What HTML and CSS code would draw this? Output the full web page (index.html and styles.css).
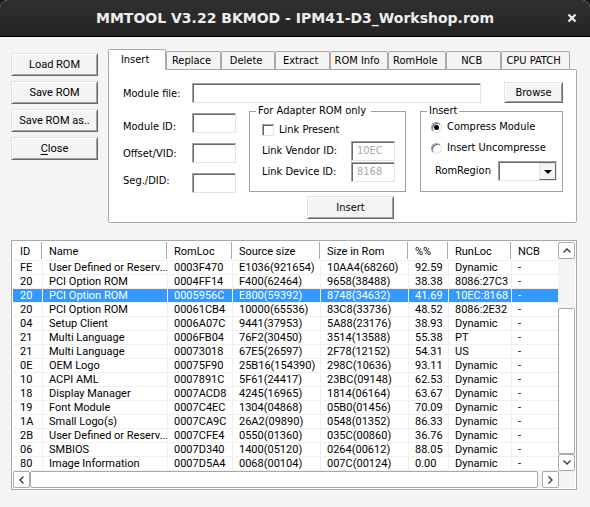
FILE: index.html
```
<!DOCTYPE html>
<html lang="en">
<head>
<meta charset="utf-8">
<title>MMTOOL V3.22 BKMOD - IPM41-D3_Workshop.rom</title>
<link rel="stylesheet" href="styles.css">
</head>
<body>
<div class="window">
  <header class="titlebar">
    <h1>MMTOOL V3.22 BKMOD - IPM41-D3_Workshop.rom</h1>
    <button class="close" aria-label="Close window"><svg width="10" height="10" viewBox="0 0 10 10"><path d="M1.5 1.5l7 7M8.500 1.500l-7 7" stroke="#eee" stroke-width="2.200" fill="none"/></svg></button>
  </header>
  <main>
    <section class="top">
      <div class="actions">
        <button class="btn">Load ROM</button>
        <button class="btn">Save ROM</button>
        <button class="btn">Save ROM as..</button>
        <button class="btn"><u>C</u>lose</button>
      </div>
      <div class="tabs">
        <nav class="tablist" role="tablist">
          <button class="tab active" role="tab" aria-selected="true">Insert</button>
          <button class="tab" role="tab">Replace</button>
          <button class="tab" role="tab">Delete</button>
          <button class="tab" role="tab">Extract</button>
          <button class="tab wide" role="tab">ROM Info</button>
          <button class="tab wide" role="tab">RomHole</button>
          <button class="tab" role="tab">NCB</button>
          <button class="tab widest" role="tab">CPU PATCH</button>
        </nav>
        <div class="panel" role="tabpanel">
          <div class="file-row">
            <label for="file">Module file:</label>
            <input class="field" id="file" type="text">
            <button class="btn">Browse</button>
          </div>
          <div class="groups">
            <div class="id-labels">
              <label for="mid">Module ID:</label>
              <label for="vid">Offset/VID:</label>
              <label for="did">Seg./DID:</label>
            </div>
            <div class="id-fields">
              <input class="field" id="mid" type="text">
              <input class="field" id="vid" type="text">
              <input class="field" id="did" type="text">
            </div>
            <fieldset class="adapter">
              <legend>For Adapter ROM only</legend>
              <div class="check"><input type="checkbox" id="link"><label for="link">Link Present</label></div>
              <div class="pair"><label for="lv">Link Vendor ID:</label><input class="field" id="lv" type="text" value="10EC" disabled></div>
              <div class="pair"><label for="ld">Link Device ID:</label><input class="field" id="ld" type="text" value="8168" disabled></div>
            </fieldset>
            <fieldset class="mode">
              <legend>Insert</legend>
              <div class="check"><input type="radio" name="mode" id="comp" checked><label for="comp">Compress Module</label></div>
              <div class="check"><input type="radio" name="mode" id="unc"><label for="unc">Insert Uncompresse</label></div>
              <div class="region"><label for="region">RomRegion</label>
                <span class="combo"><select id="region"><option></option></select><span class="drop"><svg width="8" height="4" viewBox="0 0 8 4"><path d="M0 0h8L4 4z"/></svg></span></span>
              </div>
            </fieldset>
          </div>
          <button class="btn insert">Insert</button>
        </div>
      </div>
    </section>
    <section class="list">
      <table>
        <colgroup><col class="c-id"><col><col class="c-loc"><col class="c-size"><col class="c-size"><col class="c-pct"><col class="c-run"><col class="c-ncb"></colgroup>
        <thead><tr><th>ID</th><th>Name</th><th>RomLoc</th><th>Source size</th><th>Size in Rom</th><th>%%</th><th>RunLoc</th><th>NCB</th></tr></thead>
        <tbody>
          <tr><td>FE</td><td>User Defined or Reserv...</td><td>0003F470</td><td>E1036(921654)</td><td>10AA4(68260)</td><td>92.59</td><td>Dynamic</td><td>-</td></tr>
          <tr><td>20</td><td>PCI Option ROM</td><td>0004FF14</td><td>F400(62464)</td><td>9658(38488)</td><td>38.38</td><td>8086:27C3</td><td>-</td></tr>
          <tr class="selected"><td>20</td><td>PCI Option ROM</td><td>0005956C</td><td>E800(59392)</td><td>8748(34632)</td><td>41.69</td><td>10EC:8168</td><td>-</td></tr>
          <tr><td>20</td><td>PCI Option ROM</td><td>00061CB4</td><td>10000(65536)</td><td>83C8(33736)</td><td>48.52</td><td>8086:2E32</td><td>-</td></tr>
          <tr><td>04</td><td>Setup Client</td><td>0006A07C</td><td>9441(37953)</td><td>5A88(23176)</td><td>38.93</td><td>Dynamic</td><td>-</td></tr>
          <tr><td>21</td><td>Multi Language</td><td>0006FB04</td><td>76F2(30450)</td><td>3514(13588)</td><td>55.38</td><td>PT</td><td>-</td></tr>
          <tr><td>21</td><td>Multi Language</td><td>00073018</td><td>67E5(26597)</td><td>2F78(12152)</td><td>54.31</td><td>US</td><td>-</td></tr>
          <tr><td>0E</td><td>OEM Logo</td><td>00075F90</td><td>25B16(154390)</td><td>298C(10636)</td><td>93.11</td><td>Dynamic</td><td>-</td></tr>
          <tr><td>10</td><td>ACPI AML</td><td>0007891C</td><td>5F61(24417)</td><td>23BC(09148)</td><td>62.53</td><td>Dynamic</td><td>-</td></tr>
          <tr><td>18</td><td>Display Manager</td><td>0007ACD8</td><td>4245(16965)</td><td>1814(06164)</td><td>63.67</td><td>Dynamic</td><td>-</td></tr>
          <tr><td>19</td><td>Font Module</td><td>0007C4EC</td><td>1304(04868)</td><td>05B0(01456)</td><td>70.09</td><td>Dynamic</td><td>-</td></tr>
          <tr><td>1A</td><td>Small Logo(s)</td><td>0007CA9C</td><td>26A2(09890)</td><td>0548(01352)</td><td>86.33</td><td>Dynamic</td><td>-</td></tr>
          <tr><td>2B</td><td>User Defined or Reserv...</td><td>0007CFE4</td><td>0550(01360)</td><td>035C(00860)</td><td>36.76</td><td>Dynamic</td><td>-</td></tr>
          <tr><td>06</td><td>SMBIOS</td><td>0007D340</td><td>1400(05120)</td><td>0264(00612)</td><td>88.05</td><td>Dynamic</td><td>-</td></tr>
          <tr><td>80</td><td>Image Information</td><td>0007D5A4</td><td>0068(00104)</td><td>007C(00124)</td><td>0.00</td><td>Dynamic</td><td>-</td></tr>
        </tbody>
      </table>
      <div class="vbar">
        <button class="arrow" aria-label="Scroll up"><svg width="8" height="5" viewBox="0 0 8 5"><path d="M.5 4.500L4 1l3.500 3.500"/></svg></button>
        <div class="vtrack"><div class="thumb"></div></div>
        <button class="arrow" aria-label="Scroll down"><svg width="8" height="5" viewBox="0 0 8 5"><path d="M.5.500L4 4l3.500-3.500"/></svg></button>
      </div>
      <div class="hbar">
        <button class="arrow" aria-label="Scroll left"><svg width="5" height="8" viewBox="0 0 5 8"><path d="M4.500.500L1 4l3.500 3.500"/></svg></button>
        <div class="htrack"><div class="thumb"></div></div>
        <button class="arrow" aria-label="Scroll right"><svg width="5" height="8" viewBox="0 0 5 8"><path d="M.5.500L4 4L.5 7.500"/></svg></button>
      </div>
    </section>
  </main>
</div>
</body>
</html>
```
FILE: styles.css
```
* { box-sizing: border-box; }
body {
  margin: 0;
  background: #15151f;
  color: #000;
  font: 11px/14px "DejaVu Sans Condensed", "DejaVu Sans", sans-serif;
}
button, input, select { font: inherit; color: inherit; margin: 0; }
.window {
  min-height: 100vh;
  background: #f4f4f4;
  border-radius: 8px 8px 0 0;
  overflow: hidden;
}

/* Title bar */
.titlebar {
  display: grid;
  grid-template-columns: 24px 1fr 24px;
  align-items: center;
  height: 37px;
  padding: 0 6px;
  background: linear-gradient(#303030, #242424);
  border-bottom: 1px solid #000;
  color: #eee;
}
.titlebar h1 {
  grid-column: 2;
  margin: 0;
  text-align: center;
  white-space: nowrap;
  font: bold 14px/18px "DejaVu Sans", sans-serif;
}
.close { display: flex; justify-content: center; padding: 0; border: 0; background: none; }

main { padding: 12px 13px 17px 11px; }
.top { display: flex; gap: 10px; }

/* Push buttons */
.btn {
  padding: 0;
  background: #f4f4f4;
  border: 1px solid;
  border-color: #e3e3e3 #696969 #696969 #e3e3e3;
  box-shadow: inset 1px 1px #fff, inset -1px -1px #a0a0a0;
}
.actions {
  display: flex;
  flex-direction: column;
  gap: 5px;
  width: 87px;
  padding-top: 4px;
  font: 11px/14px "Roboto", sans-serif;
}
.actions .btn { height: 23px; }
.actions u { text-underline-offset: 2px; }

/* Tabs */
.tabs { flex: 1; }
.tablist { display: flex; align-items: flex-end; height: 21px; margin-right: 7px; }
.tab {
  flex: 54 1 0;
  height: 19px;
  padding: 0 4px 0 0;
  background: #f4f4f4;
  border: 1px solid #a9a9a9;
  border-radius: 2px 2px 0 0;
}
.tab.active { flex-grow: 58; height: 21px; background: #fff; border-bottom-color: #fff; }
.tab.wide { flex-grow: 58; }
.tab.widest { flex-grow: 70; }
.panel {
  display: flex;
  flex-direction: column;
  padding: 12px 13px 3px 14px;
  margin-top: -1px;
  background: #fff;
  border: 1px solid #a9a9a9;
  border-radius: 0 2px 2px 2px;
}
.field {
  width: 44px;
  height: 20px;
  padding: 0 5px;
  background: #fff;
  border: 1px solid;
  border-color: #a0a0a0 #e3e3e3 #e3e3e3 #a0a0a0;
  border-radius: 0;
  box-shadow: inset 1px 1px #696969;
}
.field:disabled { color: #a9a9a9; }
.file-row { display: flex; align-items: center; }
.file-row label { width: 69px; padding-top: 3px; }
.file-row .field { flex: 1; margin-right: 23px; }
.file-row .btn { width: 59px; height: 21px; }
.groups { display: flex; margin-top: 5px; }
.id-labels, .id-fields { display: flex; flex-direction: column; }
.id-labels { gap: 13px; width: 69px; padding-top: 12px; }
.id-fields { gap: 10px; margin-right: 13px; padding-top: 5px; }
fieldset {
  min-width: 0;
  height: 84px;
  margin: 0;
  padding: 0 10px 0 12px;
  border: 1px solid #a0a0a0;
}
legend { margin-left: -6px; padding: 0 2px; line-height: 6px; }
.adapter { width: 157px; margin-right: 14px; padding-top: 3px; }
.adapter legend { padding-right: 5px; }
.mode { flex: 1; padding: 0 5px 0 10px; }
.mode legend { margin-left: -4px; }
.check { display: flex; align-items: center; gap: 5px; height: 20px; margin-top: 3px; }
.check input {
  appearance: none;
  width: 12px;
  height: 12px;
  background: #fff;
  border: 1px solid;
  border-color: #a0a0a0 #e3e3e3 #e3e3e3 #a0a0a0;
  box-shadow: inset 1px 1px #696969;
}
.check input[type="radio"] { width: 11px; height: 11px; border-radius: 50%; }
.check input:checked { background: radial-gradient(circle, #000 2px, #fff 3px); }
.check + .check { margin-top: 1px; }
.pair { display: flex; align-items: center; justify-content: space-between; height: 21px; }
.region { display: flex; align-items: center; justify-content: space-between; margin-top: 3px; padding-left: 4px; }
.combo { position: relative; width: 59px; height: 20px; }
.combo select {
  appearance: none;
  width: 100%;
  height: 100%;
  background: #fff;
  border: 1px solid;
  border-color: #a0a0a0 #e3e3e3 #e3e3e3 #a0a0a0;
  border-radius: 0;
  box-shadow: inset 1px 1px #696969;
}
.drop {
  position: absolute;
  inset: 2px 1px 1px auto;
  display: flex;
  align-items: center;
  justify-content: center;
  width: 17px;
  background: #f4f4f4;
  border: 1px solid;
  border-color: #e3e3e3 #696969 #696969 #e3e3e3;
  pointer-events: none;
}
.insert { align-self: center; width: 87px; height: 23px; margin: 3px 0 0 15px; }

/* Module list */
.list {
  display: grid;
  grid-template-columns: 1fr 17px;
  margin-top: 17px;
  padding: 1px;
  background: #fff;
  border: 1px solid #a9a9a9;
}
table {
  width: 100%;
  border-collapse: separate;
  border-spacing: 0;
  table-layout: fixed;
  font: 11px/13px "Roboto", sans-serif;
}
.c-id { width: 30px; }
.c-loc { width: 65px; }
.c-size { width: 88px; }
.c-pct { width: 40px; }
.c-run { width: 63px; }
.c-ncb { width: 46px; }
th, td {
  padding: 0 0 0 6px;
  overflow: hidden;
  white-space: nowrap;
  text-align: left;
  font-weight: 400;
  border-right: 1px solid #f0f0f0;
  border-bottom: 1px solid #f0f0f0;
}
th:first-child, td:first-child { padding-left: 7px; }
th {
  height: 19px;
  background: linear-gradient(#a9a9a9, #a9a9a9) right 0 top 0 / 1px 17px no-repeat;
  border-right-color: #fff;
}
th:last-child { background: none; }
td:last-child { border-right: 0; }
.selected td {
  color: #fff;
  background: repeating-linear-gradient(90deg, #c87830 0 1px, #3399ff 1px 2px) top / 100% 1px no-repeat #39f;
}
.vbar { display: flex; flex-direction: column; background: #f4f4f4; }
.arrow {
  display: flex;
  align-items: center;
  justify-content: center;
  width: 17px;
  height: 17px;
  padding: 0;
  background: #fff;
  border: 1px solid #a9a9a9;
  border-radius: 2px;
}
.arrow path { fill: none; stroke: #333; stroke-width: 1.300; }
.thumb { background: #fff; border: 1px solid #a9a9a9; border-radius: 2px; }
.vtrack { display: flex; flex: 1; flex-direction: column; justify-content: flex-end; }
.vtrack .thumb { height: 75%; }
.hbar { display: flex; grid-column: 1 / -1; padding-right: 16px; background: #f4f4f4; }
.htrack { display: flex; flex: 1; padding-right: 4px; }
.htrack .thumb { flex: 1; }
```
